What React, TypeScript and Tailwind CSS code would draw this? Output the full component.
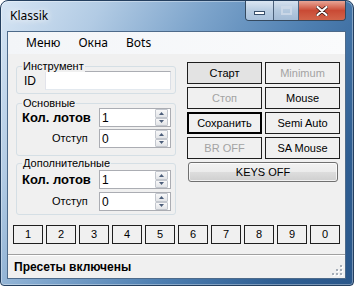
import React from "react";

const sans = "font-['Liberation_Sans',Arial,sans-serif]";
const ui = "font-['Noto_Sans','Open_Sans',sans-serif]";

function Group({
  title,
  className,
  children,
}: {
  title: string;
  className: string;
  children: React.ReactNode;
}) {
  return (
    <div className={`relative border border-[#d5dfe5] rounded-[3px] ${className}`}>
      <span className="absolute left-[5px] -top-[7px] px-[1px] bg-[#f0f0f0] text-[11px] leading-[12px] text-black">
        {title}
      </span>
      {children}
    </div>
  );
}

function Arrow({ up }: { up?: boolean }) {
  return (
    <div className="flex-1 flex items-center justify-center border border-[#c3c7ce] rounded-[1px] bg-gradient-to-b from-[#f8f8f9] to-[#e3e5e8]">
      <svg width="5" height="3" viewBox="0 0 5 3">
        <path d={up ? "M0 3 L2.5 0 L5 3Z" : "M0 0 L2.5 3 L5 0Z"} fill="#4c5e7a" />
      </svg>
    </div>
  );
}

function Spin({ value }: { value: string }) {
  return (
    <div className="flex items-center w-[72px] h-[19px] border border-[#abadb3] bg-white">
      <span className="flex-1 pl-[2px] text-[12px] leading-none text-black">{value}</span>
      <div className="flex flex-col w-[13px] h-[17px] mr-[2px]">
        <Arrow up />
        <Arrow />
      </div>
    </div>
  );
}

function Row({
  label,
  bold,
  pad,
  value,
}: {
  label: string;
  bold?: boolean;
  pad: string;
  value: string;
}) {
  return (
    <div className="flex items-center h-[19px]">
      <span
        className={`w-[82px] ${pad} ${bold ? "text-[13px] font-bold" : "text-[11px]"} text-black whitespace-nowrap`}
      >
        {label}
      </span>
      <Spin value={value} />
    </div>
  );
}

function FlatButton({
  label,
  disabled,
  pressed,
  focus,
}: {
  label: string;
  disabled?: boolean;
  pressed?: boolean;
  focus?: boolean;
}) {
  return (
    <div
      className={`h-[22px] flex items-center justify-center text-[11px] ${
        focus ? "border-2 border-black" : "border border-[#1e1e1e]"
      } ${pressed ? "bg-[#e3e3e3]" : "bg-[#f0f0f0]"} ${disabled ? "text-[#a3a3a3]" : "text-black"}`}
    >
      {label}
    </div>
  );
}

function TitleBar() {
  return (
    <div className="h-[30px] flex justify-between items-start">
      <span
        className={`ml-[9px] mt-[6px] text-[12px] text-black ${ui} [text-shadow:0_0_6px_rgba(255,255,255,0.95),0_0_10px_rgba(255,255,255,0.8)]`}
      >
        Klassik
      </span>
      <div className="mr-[7px] flex h-[20px] border border-t-0 border-[#34495f] rounded-b-[4px] overflow-hidden">
        <div className="w-[28px] flex items-center justify-center bg-gradient-to-b from-[#dbe6f2] via-[#b9cde2] to-[#aac2dc] border-r border-[#4b6079]">
          <div className="w-[11px] h-[4px] mt-[5px] bg-white border border-[#39506c]" />
        </div>
        <div className="w-[25px] flex items-center justify-center bg-gradient-to-b from-[#d5e1ee] via-[#b3c8de] to-[#a3bbd5] border-r border-[#4b6079]">
          <div className="w-[11px] h-[9px] border-2 border-t-[3px] border-[#cfdbe8] opacity-80" />
        </div>
        <div className="w-[46px] flex items-center justify-center bg-gradient-to-b from-[#e7a596] via-[#c94a35] to-[#d2644a]">
          <svg width="12" height="10" viewBox="0 0 12 10">
            <path d="M1.5 1 L10.5 9 M10.5 1 L1.5 9" stroke="#3b1a14" strokeWidth="3.6" strokeLinecap="round" />
            <path d="M1.5 1 L10.5 9 M10.5 1 L1.5 9" stroke="#ffffff" strokeWidth="2.2" strokeLinecap="round" />
          </svg>
        </div>
      </div>
    </div>
  );
}

function Grip() {
  const dots = [
    [8, 0],
    [8, 4],
    [4, 4],
    [8, 8],
    [4, 8],
    [0, 8],
  ];
  return (
    <svg width="11" height="11" viewBox="0 0 11 11" className="mr-[2px] mb-[2px] self-end">
      {dots.map(([x, y], i) => (
        <g key={i}>
          <rect x={x + 1} y={y + 1} width="2" height="2" fill="#ffffff" />
          <rect x={x} y={y} width="2" height="2" fill="#a6aeb8" />
        </g>
      ))}
    </svg>
  );
}

export default function App() {
  const keys = ["1", "2", "3", "4", "5", "6", "7", "8", "9", "0"];
  return (
    <div className={`w-[355px] h-[287px] bg-white ${sans}`}>
      <div className="w-[354px] h-[286px] flex flex-col rounded-t-[8px] rounded-b-[4px] border border-[#243f5f] bg-[linear-gradient(120deg,#d6e5f4_0%,#b2cbe4_20%,#7ea5cc_40%,#4e7fb1_62%,#2f5e92_85%,#2a578a_100%)] shadow-[inset_0_0_0_1px_rgba(255,255,255,0.35)]">
        <TitleBar />
        <div className="ml-[6px] w-[339px] h-[248px] flex flex-col border border-[#4d6a8a] bg-[#f0f0f0]">
          {/* menu */}
          <div className={`h-[22px] flex items-center pl-[18px] gap-[18px] text-[12px] text-black bg-gradient-to-r from-[#f3f5f8] to-[#fafbfc] ${ui}`}>
            <span>Меню</span>
            <span>Окна</span>
            <span>Bots</span>
          </div>

          <div className="flex pl-[8px]">
            {/* left column */}
            <div className="w-[160px] mt-[12px] flex flex-col">
              <Group title="Инструмент" className="h-[28px]">
                <div className="flex items-center pl-[7px] pt-[4px]">
                  <span className="w-[21px] text-[12px] text-black">ID</span>
                  <div className="w-[126px] h-[19px] border border-[#abadb3] border-l-[#e2e3ea] border-r-[#dbdfe6] border-b-[#e3e9ef] bg-white" />
                </div>
              </Group>
              <Group title="Основные" className="h-[53px] mt-[9px]">
                <div className="flex flex-col pt-[4px] gap-[2px]">
                  <Row label="Кол. лотов" bold pad="pl-[5px]" value="1" />
                  <Row label="Отступ" pad="pl-[35px]" value="0" />
                </div>
              </Group>
              <Group title="Дополнительные" className="h-[52px] mt-[7px]">
                <div className="flex flex-col pt-[6px] gap-[3px]">
                  <Row label="Кол. лотов" bold pad="pl-[5px]" value="1" />
                  <Row label="Отступ" pad="pl-[35px]" value="0" />
                </div>
              </Group>
            </div>

            {/* right column */}
            <div className="ml-[11px] mt-[8px] flex flex-col">
              <div className="grid grid-cols-[75px_75px] gap-x-[3px] gap-y-[3px]">
                <FlatButton label="Старт" pressed />
                <FlatButton label="Minimum" disabled />
                <FlatButton label="Стоп" disabled />
                <FlatButton label="Mouse" />
                <FlatButton label="Сохранить" focus />
                <FlatButton label="Semi Auto" />
                <FlatButton label="BR OFF" disabled />
                <FlatButton label="SA Mouse" />
              </div>
              <div className="mt-[3px] ml-[1px] w-[150px] h-[20px] flex items-center justify-center rounded-[3px] border border-[#707070] bg-[linear-gradient(#f2f2f2_0%,#ebebeb_50%,#dddddd_51%,#cfcfcf_100%)] shadow-[inset_0_0_0_1px_rgba(255,255,255,0.7)] text-[11px] text-black">
                KEYS OFF
              </div>
            </div>
          </div>

          {/* presets */}
          <div className="flex gap-[3px] pl-[5px] mt-[10px]">
            {keys.map((k) => (
              <div
                key={k}
                className="w-[30px] h-[19px] flex items-center justify-center border border-[#1e1e1e] bg-[#f0f0f0] text-[11px] text-black"
              >
                {k}
              </div>
            ))}
          </div>

          {/* status */}
          <div className="mt-auto h-[24px] flex items-center border-t border-[#a0a0a0] shadow-[inset_0_1px_0_#ffffff]">
            <span className="pl-[6px] text-[12px] font-bold text-black">Пресеты включены</span>
            <div className="ml-auto h-full flex">
              <Grip />
            </div>
          </div>
        </div>
      </div>
    </div>
  );
}
